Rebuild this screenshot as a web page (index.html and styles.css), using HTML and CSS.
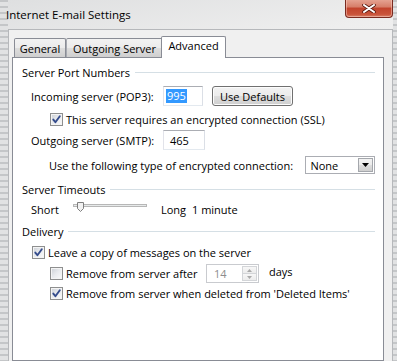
FILE: index.html
```html
<!DOCTYPE html>
<html lang="en">

<head>
    <meta charset="UTF-8">
    <meta name="viewport" content="width=device-width, initial-scale=1.0">
    <title>Internet E-mail Settings</title>
    <link rel="stylesheet" href="styles.css">
</head>

<body>
    <div class="window">
        <div class="titlebar">
            <span class="title">Internet E-mail Settings</span>
            <button class="btn-close" type="button">
                <svg width="14" height="9" viewBox="0 0 14 9">
                    <path d="M2 1 L12 8 M12 1 L2 8" stroke="#5a1a10" stroke-width="3.6" stroke-linecap="round" />
                    <path d="M2 1 L12 8 M12 1 L2 8" stroke="#fff" stroke-width="2" stroke-linecap="round" />
                </svg>
            </button>
        </div>

        <div class="client">
            <div class="tabs">
                <div class="tab tab-general">General</div>
                <div class="tab tab-outgoing">Outgoing Server</div>
                <div class="tab tab-advanced active">Advanced</div>
            </div>

            <div class="panel">
                <div class="group-title"><span>Server Port Numbers</span></div>

                <div class="row row-pop3">
                    <span class="field-label">Incoming server (POP3):</span>
                    <div class="textbox"><span class="selected-text">995</span></div>
                    <button class="btn-defaults" type="button">Use Defaults</button>
                </div>

                <div class="row row-ssl indent-2">
                    <span class="checkbox checked"></span>
                    <span>This server requires an encrypted connection (SSL)</span>
                </div>

                <div class="row row-smtp">
                    <span class="field-label">Outgoing server (SMTP):</span>
                    <div class="textbox wide">465</div>
                </div>

                <div class="row row-enc">
                    <span class="enc-label">Use the following type of encrypted connection:</span>
                    <div class="combo">
                        <span>None</span>
                        <span class="combo-btn">
                            <svg width="7" height="4" viewBox="0 0 7 4"><path d="M0 0 H7 L3.5 4 Z" fill="#000" /></svg>
                        </span>
                    </div>
                </div>

                <div class="group-title gt-timeouts"><span>Server Timeouts</span></div>

                <div class="row row-slider">
                    <span class="short-label">Short</span>
                    <svg class="slider" width="74" height="18" viewBox="0 0 74 18">
                        <rect x="0.5" y="6.5" width="73" height="2" fill="#e7eaea" stroke="#b7b7b7" />
                        <path d="M4.5 4.5 H10.5 V10.5 L7.5 13.5 L4.5 10.5 Z" fill="#f2f2f2" stroke="#7f7f7f" />
                    </svg>
                    <span class="long-label">Long</span>
                    <span>1 minute</span>
                </div>

                <div class="group-title gt-delivery"><span>Delivery</span></div>

                <div class="row row-leave indent-1">
                    <span class="checkbox checked"></span>
                    <span>Leave a copy of messages on the server</span>
                </div>

                <div class="row row-after indent-2">
                    <span class="checkbox"></span>
                    <span class="after-label">Remove from server after</span>
                    <div class="spinner">
                        <span class="spin-value">14</span>
                        <span class="spin-btns">
                            <span class="spin-btn"><svg width="5" height="3" viewBox="0 0 5 3"><path d="M0 3 H5 L2.5 0 Z" fill="#a9a9a9" /></svg></span>
                            <span class="spin-btn"><svg width="5" height="3" viewBox="0 0 5 3"><path d="M0 0 H5 L2.5 3 Z" fill="#a9a9a9" /></svg></span>
                        </span>
                    </div>
                    <span class="days">days</span>
                </div>

                <div class="row row-deleted indent-2">
                    <span class="checkbox checked"></span>
                    <span>Remove from server when deleted from 'Deleted Items'</span>
                </div>
            </div>
        </div>
    </div>
</body>

</html>
```

FILE: styles.css
```css
body {
    margin: 0;
    padding: 0;
    width: 397px;
    height: 361px;
    overflow: hidden;
    font-family: "Open Sans", "Noto Sans", sans-serif;
    font-size: 11px;
    color: #000;
    background:
        repeating-linear-gradient(180deg, #c4c6c8 0 2px, #e1e2e3 2px 6px) left top / 8px 100% no-repeat,
        repeating-linear-gradient(180deg, #c4c6c8 0 2px, #e1e2e3 2px 6px) right top / 4px 100% no-repeat,
        linear-gradient(170deg, #dedfe0 0%, #eeeeee 20%, #f6f6f6 45%, #e6e7e8 70%, #ededed 100%);
}

.window {
    display: flex;
    flex-direction: column;
    height: 361px;
}

.titlebar {
    height: 29px;
    display: flex;
    justify-content: space-between;
    align-items: flex-start;
    padding: 0 4px 0 6px;
}

.title {
    margin-top: 7px;
    line-height: 15px;
    font-size: 11.5px;
}

.btn-close {
    width: 48px;
    height: 19px;
    margin-top: -1px;
    padding: 0;
    border: 1px solid #7a2b20;
    border-top: none;
    border-radius: 0 0 4px 4px;
    background: linear-gradient(180deg, #e7a796 0%, #d67d68 45%, #c2432c 50%, #c9533a 85%, #d9826a 100%);
    box-shadow: inset 0 0 0 1px rgba(255, 220, 210, 0.45);
    display: flex;
    justify-content: center;
    align-items: center;
}

.client {
    flex: 1;
    margin: 0 4px 0 8px;
    border: 1px solid #b6b8bb;
    border-bottom: none;
    background: #f0f0f0;
    padding: 6px 8px 0 3px;
    display: flex;
    flex-direction: column;
}

.tabs {
    display: flex;
    align-items: flex-end;
    height: 21px;
    padding-left: 2px;
}

.tab {
    height: 19px;
    box-sizing: border-box;
    border: 1px solid #898c95;
    border-bottom: none;
    border-radius: 2px 2px 0 0;
    background: linear-gradient(180deg, #f2f2f2 0%, #ebebeb 50%, #dddddd 51%, #cfcfcf 100%);
    display: flex;
    justify-content: center;
    align-items: center;
    line-height: 15px;
    padding-top: 1px;
}

.tab-general {
    width: 52px;
}

.tab-outgoing {
    width: 97px;
    border-left-color: #a6a9b0;
}

.tab-advanced {
    width: 65px;
    margin-left: -2px;
}

.tab.active {
    height: 22px;
    margin-bottom: -1px;
    background: #fff;
    position: relative;
    align-items: flex-start;
    padding-top: 1px;
}

.panel {
    flex: 1;
    border: 1px solid #898c95;
    background: #fff;
    padding: 6px 8px 0 9px;
}

.group-title {
    display: flex;
    align-items: center;
    height: 16px;
    line-height: 15px;
}

.group-title::after {
    content: "";
    flex: 1;
    height: 1px;
    margin-left: 5px;
    background: #d5dfe5;
}

.gt-timeouts {
    margin-top: 7px;
}

.gt-delivery {
    margin-top: 5px;
}

.row {
    display: flex;
    align-items: center;
    line-height: 15px;
    padding-left: 9px;
    height: 18px;
}

.indent-1 {
    padding-left: 10px;
}

.indent-2 {
    padding-left: 28px;
}

.row-pop3 {
    margin-top: 6px;
    height: 20px;
}

.row-ssl {
    margin-top: 4px;
}

.row-smtp {
    margin-top: 2px;
    height: 20px;
}

.row-enc {
    margin-top: 6px;
    padding-left: 27px;
}

.row-slider {
    margin-top: 3px;
}

.row-leave {
    margin-top: 4px;
}

.row-after {
    margin-top: 2px;
    height: 20px;
}

.row-deleted {
    margin-top: 1px;
}

.field-label {
    width: 132px;
}

.textbox {
    width: 40px;
    height: 20px;
    box-sizing: border-box;
    border: 1px solid #abadb3;
    border-color: #abadb3 #dbdfe6 #e3e9ef #e2e3ea;
    background: #fff;
    display: flex;
    align-items: center;
    padding-left: 2px;
}

.textbox.wide {
    width: 42px;
    padding-left: 6px;
}

.selected-text {
    background: #3399ff;
    color: #fff;
    padding: 0 1px;
    line-height: 14px;
}

.btn-defaults {
    margin-left: 9px;
    width: 81px;
    height: 20px;
    padding: 0;
    border: 1px solid #707070;
    border-radius: 3px;
    background: linear-gradient(180deg, #f2f2f2 0%, #ebebeb 50%, #dddddd 51%, #cfcfcf 100%);
    box-shadow: inset 0 0 0 1px #fcfcfc;
    font-family: inherit;
    font-size: 11px;
    color: #000;
    line-height: 15px;
}

.checkbox {
    width: 13px;
    height: 13px;
    box-sizing: border-box;
    border: 1px solid #8e8f8f;
    box-shadow: inset 0 0 0 1px #f4f4f4;
    background: linear-gradient(135deg, #cbcfd5 0%, #e9ebee 50%, #fbfbfb 100%);
    margin-right: 3px;
    flex-shrink: 0;
}

.checkbox.checked {
    background:
        url("data:image/svg+xml,%3Csvg xmlns='http://www.w3.org/2000/svg' width='11' height='11' viewBox='0 0 11 11'%3E%3Cpath d='M2.3 5.6 L4.4 8.2 L8.8 2.2' fill='none' stroke='%23354c8c' stroke-width='1.9' stroke-linecap='round' stroke-linejoin='round'/%3E%3C/svg%3E") center / 11px 11px no-repeat,
        linear-gradient(135deg, #cbcfd5 0%, #e9ebee 50%, #fbfbfb 100%);
}

.enc-label {
    width: 258px;
}

.combo {
    width: 70px;
    height: 18px;
    box-sizing: border-box;
    border: 1px solid #abadb3;
    background: #fff;
    display: flex;
    align-items: center;
    justify-content: space-between;
    padding-left: 4px;
    padding-right: 1px;
}

.combo-btn {
    width: 15px;
    height: 14px;
    box-sizing: border-box;
    border: 1px solid #a4a7ac;
    background: linear-gradient(180deg, #f2f2f2 0%, #ebebeb 50%, #dddddd 51%, #cfcfcf 100%);
    display: flex;
    justify-content: center;
    align-items: center;
}

.short-label {
    width: 42px;
}

.slider {
    display: block;
    margin-top: -4px;
}

.long-label {
    margin-left: 14px;
    width: 31px;
}

.after-label {
    width: 140px;
}

.spinner {
    width: 53px;
    height: 19px;
    box-sizing: border-box;
    border: 1px solid #c9cbcf;
    background: #fff;
    display: flex;
    justify-content: space-between;
    align-items: center;
    padding: 1px;
    margin-top: 1px;
}

.spin-value {
    color: #8d8d8d;
    padding-left: 6px;
}

.spin-btns {
    display: flex;
    flex-direction: column;
    width: 15px;
    height: 15px;
}

.spin-btn {
    flex: 1;
    border: 1px solid #d3d5d8;
    background: linear-gradient(180deg, #f7f7f7, #ececec);
    display: flex;
    justify-content: center;
    align-items: center;
}

.spin-btn + .spin-btn {
    border-top: none;
}

.days {
    margin-left: 10px;
    margin-top: -3px;
}
```
